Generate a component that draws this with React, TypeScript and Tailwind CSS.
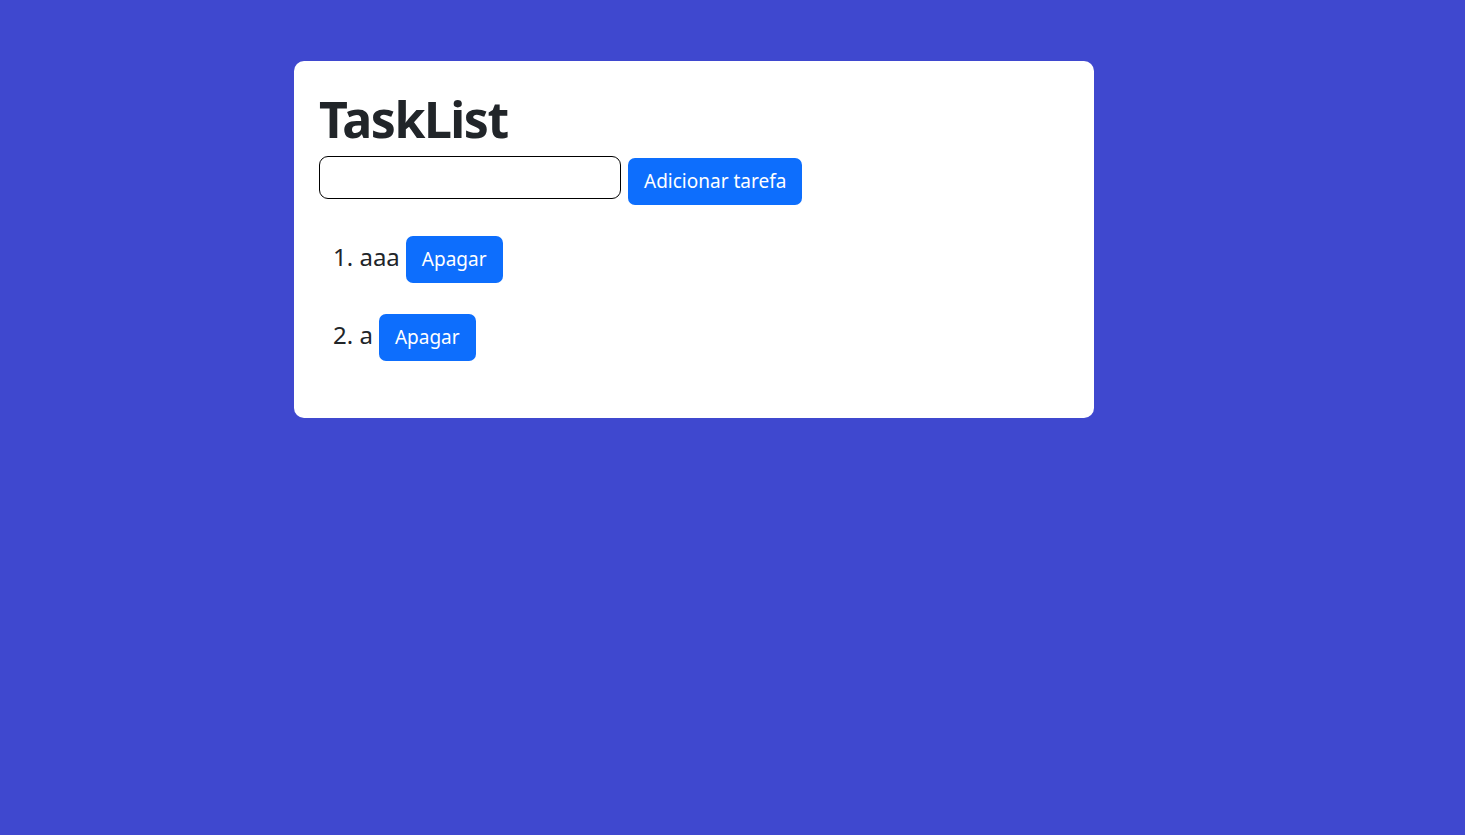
import React from "react";

export default function App() {
  const tasks = ["aaa", "a"];
  return (
    <div className="min-h-[835px] w-full bg-[#3f48cf] pt-[61px] pl-[294px] font-['Segoe_UI','Noto_Sans',sans-serif] text-[#212529]">
      <div className="w-[800px] rounded-[10px] bg-white px-[25px] pt-[28px] pb-[25px]">
        <h1 className="text-[50px] font-bold leading-[1.2] tracking-[-1.5px]">TaskList</h1>
        <div className="mt-[2px] flex items-start gap-[7px]">
          <input className="mt-[5px] h-[43px] w-[302px] rounded-[9px] border border-black bg-white px-2 text-[20px] outline-none" />
          <button className="mt-[7px] h-[47px] rounded-[7px] bg-[#0d6efd] px-[16px] text-[19px] leading-[1.5] text-white">
            Adicionar tarefa
          </button>
        </div>
        <ol className="mt-[31px] mb-[32px] flex flex-col gap-[31px] pl-[14px]">
          {tasks.map((t, i) => (
            <li key={i} className="flex items-center gap-[6px] text-[24px]">
              <span className="-mt-[6px]">{i + 1}. {t}</span>
              <button className="h-[47px] rounded-[7px] bg-[#0d6efd] px-[16px] text-[19px] leading-[1.5] text-white">
                Apagar
              </button>
            </li>
          ))}
        </ol>
      </div>
    </div>
  );
}
